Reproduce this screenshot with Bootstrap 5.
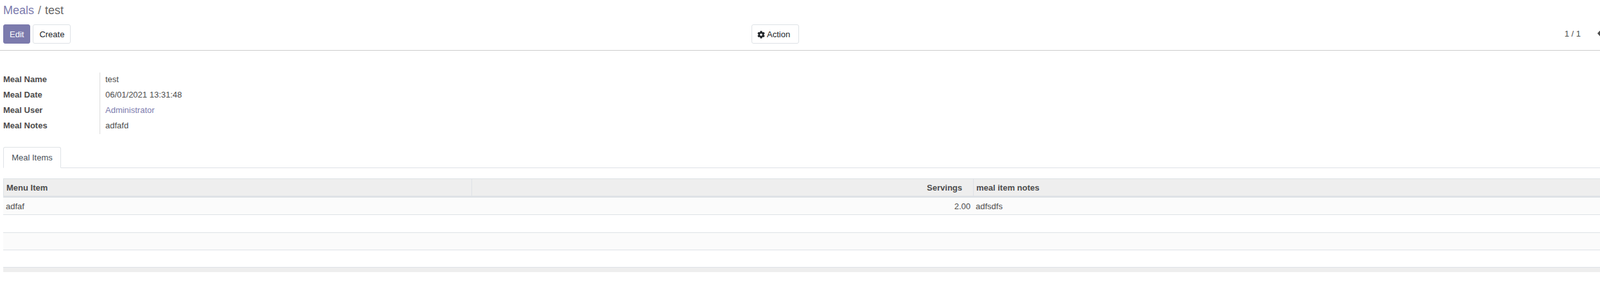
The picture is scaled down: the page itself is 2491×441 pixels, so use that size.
<!DOCTYPE html>
<html lang="en">
<head>
  <meta charset="UTF-8" />
  <meta name="viewport" content="width=device-width, initial-scale=1.0"/>
  <title>Meals / test</title>
  <link href="https://cdn.jsdelivr.net/npm/bootstrap@5.3.0/dist/css/bootstrap.min.css" rel="stylesheet" />
  <style>
    html, body { height: 441px; overflow: hidden; }
    body { background: #fff; color: #4c4c4c; font: 13px/19.5px "Liberation Sans", Arial, sans-serif; }
    a { color: #7c7bad; text-decoration: none; }
    .sheet { width: 2530px; padding-left: 5px; }
    .head-bar { height: 79px; margin-left: -5px; padding-left: 5px; border-bottom: 1px solid #ccc; }
    .crumbs { height: 38px; font-size: 18px; line-height: 20px; padding-top: 6px; color: #666; }
    .crumbs .sep { padding: 0 6px; color: #777; }
    .tools { display: grid; grid-template-columns: 1165px auto 1fr; }
    .btn.act { height: 30px; padding: 0 9px; font-size: 13px; line-height: 29px; border-radius: 3px; border: 1px solid #dee2e6; background: #fff; color: #212529; }
    .btn.act-main { background: #7c7bad; border-color: #7c7bad; color: #fff; }
    .gear { width: 12px; height: 12px; margin-top: -2px; margin-right: 3px; vertical-align: middle; }
    .btn.act-cog { padding: 0 13px 0 8px; }
    .pager { height: 30px; line-height: 29px; color: #4c4c4c; padding-right: 33px; }
    .pager svg { margin-left: 24px; }
    .fields { padding-top: 34px; }
    .field { height: 24px; line-height: 20px; }
    .fld-label { width: 150px; font-weight: 700; }
    .fld-val { padding-left: 8px; border-left: 1px solid #ddd; }
    .fld-label, .fld-val { padding-top: 1px; padding-bottom: 3px; }
    .tabs-wrap { margin-top: 20px; }
    .tabs-wrap.nav-tabs { border-bottom: 1px solid #dee2e6; }
    .tabs-wrap .nav-link.active { height: 33px; width: 90px; padding: 0; text-align: center; font-size: 13px; line-height: 32px; color: #495057; border-radius: 3px 3px 0 0; border-color: #dee2e6 #dee2e6 #fff; }
    .lines { margin: 16px 0 0; width: 100%; table-layout: fixed; color: #4c4c4c; font-size: 13px; border-collapse: separate; border-spacing: 0; }
    .lines th, .lines td { box-sizing: border-box; padding: 4px 4px 2px; line-height: 20px; }
    .lines > :not(caption) > * > * { box-shadow: none; background: transparent; border-bottom: 0; }
    .lines thead th { height: 30px; background: #eee; border-top: 1px solid #dee2e6; border-bottom: 3px solid #dee2e6; border-left: 1px solid #dee2e6; }
    .lines tbody td { height: 27px; border-bottom: 1px solid #dee2e6; }
    .lines tbody tr:nth-child(2) td { height: 28px; }
    .lines tbody tr:nth-child(odd) td { background: #fbfbfb; }
    .lines tfoot td { height: 7px; padding: 0; background: #eee; border: 0; }
    .lines thead .num-head { padding-right: 17px; }
  </style>
</head>
<body>
  <div class="sheet">
    <div class="head-bar">
      <div class="crumbs"><a href="#">Meals</a><span class="sep">/</span>test</div>
      <div class="tools">
        <div class="d-flex gap-1">
          <button class="btn act act-main" type="button">Edit</button>
          <button class="btn act" type="button">Create</button>
        </div>
        <div>
          <button class="btn act act-cog" type="button">
            <svg class="gear" viewBox="0 0 512 512" fill="#212529"><path d="M487.4 315.7l-42.6-24.6c4.3-23.2 4.3-47 0-70.2l42.6-24.6c4.9-2.8 7.1-8.6 5.5-14-11.1-35.6-30-67.8-54.7-94.6-3.8-4.1-10-5.1-14.8-2.3L380.8 110c-17.9-15.4-38.5-27.3-60.8-35.1V25.8c0-5.6-3.9-10.5-9.4-11.7-36.7-8.2-74.3-7.8-109.2 0-5.5 1.2-9.4 6.1-9.4 11.7V75c-22.2 7.9-42.8 19.8-60.8 35.1L88.7 85.5c-4.9-2.8-11-1.9-14.8 2.3-24.7 26.7-43.6 58.9-54.7 94.6-1.7 5.4.6 11.2 5.5 14L67.3 221c-4.3 23.2-4.3 47 0 70.2l-42.6 24.6c-4.9 2.8-7.1 8.6-5.5 14 11.1 35.6 30 67.8 54.7 94.6 3.8 4.1 10 5.1 14.8 2.3l42.6-24.6c17.9 15.4 38.5 27.3 60.8 35.1v49.2c0 5.6 3.9 10.5 9.4 11.7 36.7 8.2 74.3 7.8 109.2 0 5.5-1.2 9.4-6.1 9.4-11.7v-49.2c22.2-7.9 42.8-19.8 60.8-35.1l42.6 24.6c4.9 2.8 11 1.9 14.8-2.3 24.7-26.7 43.6-58.9 54.7-94.6 1.5-5.5-.7-11.3-5.6-14.1zM256 336c-44.1 0-80-35.9-80-80s35.9-80 80-80 80 35.9 80 80-35.9 80-80 80z"/></svg>Action
          </button>
        </div>
        <div class="pager d-flex justify-content-end">
          <span>1 / 1</span>
          <svg width="12" height="28" viewBox="0 0 12 28" fill="#4c4c4c"><path d="M7 8.5v11L2 14z"/></svg>
        </div>
      </div>
    </div>

    <div class="fields">
      <div class="field d-flex"><div class="fld-label">Meal Name</div><div class="fld-val">test</div></div>
      <div class="field d-flex"><div class="fld-label">Meal Date</div><div class="fld-val">06/01/2021 13:31:48</div></div>
      <div class="field d-flex"><div class="fld-label">Meal User</div><div class="fld-val"><a href="#">Administrator</a></div></div>
      <div class="field d-flex"><div class="fld-label">Meal Notes</div><div class="fld-val">adfafd</div></div>
    </div>

    <ul class="nav nav-tabs tabs-wrap">
      <li class="nav-item"><a class="nav-link active" href="#">Meal Items</a></li>
    </ul>

    <table class="table lines">
      <colgroup><col style="width:729px"><col style="width:781px"><col></colgroup>
      <thead>
        <tr><th>Menu Item</th><th class="text-end num-head">Servings</th><th>meal item notes</th></tr>
      </thead>
      <tbody>
        <tr><td>adfaf</td><td class="text-end">2.00</td><td>adfsdfs</td></tr>
        <tr><td></td><td></td><td></td></tr>
        <tr><td></td><td></td><td></td></tr>
        <tr><td></td><td></td><td></td></tr>
      </tbody>
      <tfoot>
        <tr><td colspan="3"></td></tr>
      </tfoot>
    </table>
  </div>
</body>
</html>
